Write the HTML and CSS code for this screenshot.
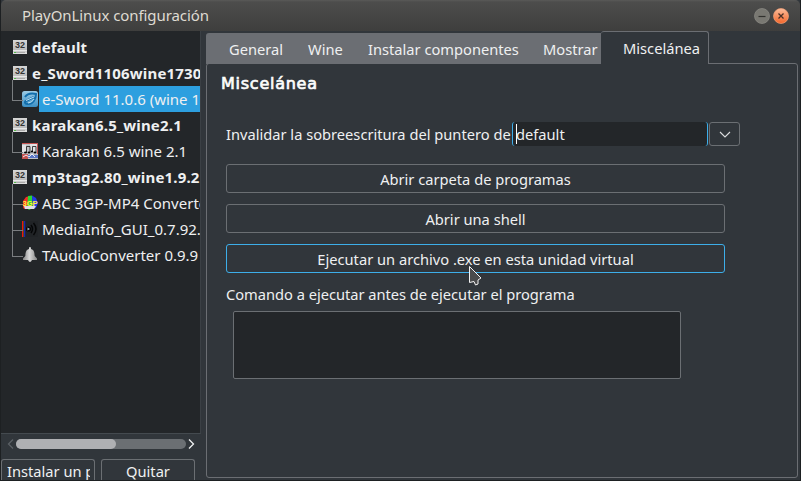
FILE: index.html
```html
<!DOCTYPE html>
<html lang="es">
<head>
<meta charset="utf-8">
<title>PlayOnLinux configuración</title>
<link rel="stylesheet" href="styles.css">
</head>
<body>
<svg class="defs" width="0" height="0" aria-hidden="true">
  <defs>
    <linearGradient id="drive-face" x1="0" y1="0" x2="0" y2="1"><stop offset="0" stop-color="#d6d6d6"/><stop offset=".7" stop-color="#bcbcbc"/><stop offset="1" stop-color="#e4e4e4"/></linearGradient>
    <linearGradient id="sword-face" x1="0" y1="0" x2="0" y2="1"><stop offset="0" stop-color="#9ccbe5"/><stop offset="1" stop-color="#3b8fc4"/></linearGradient>
    <linearGradient id="bell-face"><stop offset="0" stop-color="#858585"/><stop offset=".45" stop-color="#d8d8d8"/><stop offset="1" stop-color="#858585"/></linearGradient>
    <symbol id="drive" viewBox="0 0 14 14"><path fill="url(#drive-face)" d="M0 0h14v14H0z"/><path fill="#e8e8e8" d="M0 10h14v1H0z"/><path fill="#aaa" d="M2 12h10v1H2z"/><path fill="#50b848" d="M1 12h2v1H1z"/><text x="7" y="8.2" text-anchor="middle" class="drive-label">32</text></symbol>
  </defs>
</svg>
<div class="window">
  <header class="titlebar">
    <h1 class="title">PlayOnLinux configuración</h1>
    <div class="controls">
      <svg class="control" viewBox="0 0 16 16"><circle cx="8" cy="8" r="7.5" class="min-face"/><path d="M4.5 8.5h7" stroke="#31312e" stroke-width="1.2"/></svg>
      <svg class="control" viewBox="0 0 16 16"><defs><linearGradient id="close-face" x1="0" y1="0" x2="0" y2="1"><stop offset="0" stop-color="#fbbd9b"/><stop offset="1" stop-color="#f4662a"/></linearGradient></defs><circle cx="8" cy="8" r="7.5" fill="url(#close-face)" stroke="#f5a077" stroke-width=".7"/><path d="M5.5 5.5l5 5m0-5l-5 5" stroke="#4a3027" stroke-width="1.3"/></svg>
    </div>
  </header>
  <main class="content">
    <aside class="sidebar">
      <ul class="tree">
        <li><div class="row"><svg class="drive"><use href="#drive"/></svg><span class="drive-name">default</span></div></li>
        <li><div class="row"><svg class="drive"><use href="#drive"/></svg><span class="drive-name">e_Sword1106wine1730</span></div>
          <ul class="apps">
            <li class="row app selected"><svg class="app-icon" viewBox="0 0 16 16"><rect width="16" height="16" rx="2.5" fill="url(#sword-face)"/><path d="M3 6C5 3 9 2 14 3c0 5-3 10-8 10-3 0-4-2-2-3l8-4" fill="none" stroke="#126eac" stroke-width="2"/><path d="M4 9.5l8-3.5M6 12c3-.5 5-2 6-4" fill="none" stroke="#d5f1fc" stroke-width=".9"/></svg><span class="app-name">e-Sword 11.0.6 (wine 1</span></li>
          </ul></li>
        <li><div class="row"><svg class="drive"><use href="#drive"/></svg><span class="drive-name">karakan6.5_wine2.1</span></div>
          <ul class="apps">
            <li class="row app"><svg class="app-icon" viewBox="0 0 16 16"><path fill="#c0c3c7" d="M0 0h16v16H0z"/><path d="M0 2h4v7H0zM8 1h7v8H8z" fill="#e2e3e5"/><path d="M0 11h6v5H0zM0 0h16v1H0zM15 0h1v11h-1z" fill="#c45250"/><path d="M6 12h10v3H6z" fill="#5c77c5"/><path d="M1 14l3-2 3 2 3-3 3 3" fill="none" stroke="#eceef4"/><path d="M4.5 9V3.500H8V9M10.500 8V3.500H14V9" fill="none" stroke="#171717" stroke-width=".8"/><ellipse cx="3.500" cy="9.500" rx="1.500" ry="1"/><ellipse cx="7" cy="9.500" rx="1.500" ry="1"/><ellipse cx="10" cy="8.500" rx="1.200" ry="1"/><ellipse cx="13" cy="9.500" rx="1.500" ry="1"/></svg><span class="app-name">Karakan 6.5 wine 2.1</span></li>
          </ul></li>
        <li><div class="row"><svg class="drive"><use href="#drive"/></svg><span class="drive-name">mp3tag2.80_wine1.9.2</span></div>
          <ul class="apps">
            <li class="row app"><svg class="app-icon" viewBox="0 0 16 16"><path d="M1 6l3-4 4-1-2 12-4 1-1-2z" fill="#f32d26"/><path d="M6 1l4-.5 1 12.500-4 2-2-2z" fill="#27d637"/><path d="M10 .5L14 3l2 5-2 5-3 1z" fill="#243bea"/><path d="M2 11h12l-2 3H3z" fill="#dedee4"/><text x="8" y="10.500" text-anchor="middle" class="gp-label">3GP</text></svg><span class="app-name">ABC 3GP-MP4 Converter</span></li>
            <li class="row app"><svg class="app-icon" viewBox="0 0 16 16"><path fill="#202326" d="M3 0h13v16H3z"/><path fill="#f0160c" d="M0 0h1.600v16H0z"/><path fill="#087c24" d="M1.600 0h.6v16h-.6z"/><path fill="#1722d3" d="M2.200 0h1v16h-1z"/><circle cx="6.500" cy="8" r="2.600" fill="#060708"/><path d="M5.500 6.500L8 8 5.500 9.500z" fill="#a7b5bc"/><path d="M9 4q3 4 0 8M11.500 2q5 6 0 12" fill="none" stroke="#050607" stroke-width="1.500"/></svg><span class="app-name">MediaInfo_GUI_0.7.92.</span></li>
            <li class="row app"><svg class="app-icon" viewBox="0 0 16 16"><path d="M7 1a1 1 0 0 1 2 0v1c3.400 1 3.400 4 3.700 7l2.300 2.500V13H1v-1.500L3.300 9C3.600 6 3.600 3 7 2z" fill="url(#bell-face)"/><path d="M6 13h4q-2 4-4 0" fill="#d0d0d0"/></svg><span class="app-name">TAudioConverter 0.9.9</span></li>
          </ul></li>
      </ul>
      <div class="scroll"><svg class="arrow off" viewBox="0 0 7 12"><path d="M6 1.500L1.500 6 6 10.500"/></svg><div class="track"><div class="thumb"></div></div><svg class="arrow" viewBox="0 0 7 12"><path d="M1 1.500L5.500 6 1 10.500"/></svg></div>
      <div class="actions"><button class="btn install"><span>Instalar un programa</span></button><button class="btn remove"><span>Quitar</span></button></div>
    </aside>
    <section class="notebook">
      <nav class="tabs">
        <div class="inactive"><span class="tab general">General</span><span class="tab wine">Wine</span><span class="tab components">Instalar componentes</span><span class="tab show">Mostrar</span></div>
        <span class="tab-active">Miscelánea</span><div class="rest"></div>
      </nav>
      <div class="panel">
        <h2 class="heading">Miscelánea</h2>
        <div class="field"><label class="pointer-label">Invalidar la sobreescritura del puntero de</label><div class="input"><span>default</span></div><button class="btn drop"><svg viewBox="0 0 12 7"><path d="M1 1l5 5 5-5"/></svg></button></div>
        <div class="buttons"><button class="btn">Abrir carpeta de programas</button><button class="btn">Abrir una shell</button><button class="btn hot">Ejecutar un archivo .exe en esta unidad virtual</button></div>
        <p class="command-label">Comando a ejecutar antes de ejecutar el programa</p>
        <div class="textarea"></div>
      </div>
    </section>
  </main>
  <svg class="cursor" viewBox="0 0 16 22"><path d="M3.500 1.500v16l4.500-1 1.500 3.500 2.500-1v-4l3-2z" fill="#4a4b4c" stroke="#f3f3f3"/></svg>
</div>
</body>
</html>
```
FILE: styles.css
```css
* { box-sizing: border-box; }
body { margin: 0; background: #202325; font: 15px/20px "Noto Sans", sans-serif; color: #eff0f1; }
h1, h2, p, ul { margin: 0; padding: 0; font-weight: 400; }
ul { list-style: none; }
.defs { position: absolute; }
.window { position: relative; display: flex; flex-direction: column; width: 801px; height: 481px; overflow: hidden; background: #31363b; border: solid #1d2022; border-width: 0 1px 1px; }
.titlebar { display: flex; flex: none; align-items: center; justify-content: space-between; height: 31px; padding: 0 11px 0 21px; background: linear-gradient(#5a5a58 0, #4d4d4c 2px, #3e3e3d 100%); border-radius: 5px 5px 0 0; }
.title { font-size: 15px; letter-spacing: -.08px; line-height: 20px; padding-bottom: 1px; color: #dfdbd2; }
.controls { display: flex; gap: 3px; padding-top: 1px; }
.control { width: 16px; height: 16px; }
.min-face { fill: #797872; stroke: #8e8d86; stroke-width: .7; }
.content { display: flex; flex: 1; min-height: 0; }
.sidebar { width: 200px; flex: none; display: flex; flex-direction: column; }
.tree { height: 403px; padding-top: 3px; overflow: hidden; background: #232629; border-right: 1px solid #3b4045; border-bottom: 1px solid #444a4f; }
.row { display: flex; align-items: center; height: 26px; white-space: nowrap; padding-left: 12px; }
.drive { width: 14px; height: 14px; flex: none; margin-right: 5px; }
.drive-label { font: bold 9px "Liberation Sans", sans-serif; fill: #333; }
.drive-name { font-weight: 700; letter-spacing: .18px; }
.apps { margin-left: 11px; position: relative; }
.app { position: relative; padding-left: 10px; }
.app::before { content: ""; position: absolute; left: 0; top: -13px; width: 10px; height: 27px; border: solid #7a7d80; border-width: 0 0 1px 1px; }
.app:first-child::before { top: -6px; height: 20px; }
.app-icon { width: 16px; height: 16px; flex: none; }
.app-name { display: flex; align-items: center; height: 26px; flex: 1; padding-left: 3px; margin-left: 1px; }
.selected .app-name { background: #2d9fdf; }
.gp-label { font: bold 7.5px "Liberation Sans", sans-serif; fill: #fff13b; }
.scroll { display: flex; align-items: center; height: 19px; padding: 0 6px; gap: 2px; }
.arrow { width: 7px; height: 12px; flex: none; fill: none; stroke: #eff0f1; stroke-width: 1.3; }
.off { stroke: #5b6065; }
.track { flex: 1; height: 10px; border-radius: 5px; background: #6b6f73; }
.thumb { width: 100px; height: 10px; border-radius: 5px; background: #afb0b3; }
.actions { display: flex; gap: 6px; padding-top: 6px; height: 27px; overflow: hidden; }
.btn { display: flex; align-items: center; justify-content: center; margin: 0; padding: 0; border: 1px solid #6b6f73; border-radius: 3px; background: transparent; color: #eff0f1; font: inherit; white-space: nowrap; }
.actions .btn { height: 23px; width: 94px; flex: none; border-bottom: 0; border-radius: 3px 3px 0 0; font-size: 14.67px; }
.actions .install { justify-content: flex-start; padding: 0 4px 0 5px; }
.install span { overflow: hidden; }
.notebook { flex: 1; display: flex; flex-direction: column; padding: 0 2px 2px 5px; min-width: 0; font-size: 14.67px; }
.tabs { display: flex; height: 32px; flex: none; position: relative; z-index: 1; }
.inactive { width: 395px; height: 31px; margin-top: 2px; flex: none; display: flex; overflow: hidden; background: #6b6e73; border-radius: 3px 0 0 0; white-space: nowrap; line-height: 33px; padding-left: 23px; }
.general { width: 79px; } .wine { width: 60px; } .components { width: 175px; }
.tab { flex: none; }
.tab-active { width: 108px; height: 33px; flex: none; background: #31363b; border: solid #6b6e73; border-width: 1px 1px 0 0; border-radius: 3px 3px 0 0; padding-left: 22px; line-height: 33px; }
.rest { flex: 1; }
.panel { flex: 1; border: 1px solid #6b6e73; border-radius: 3px; padding: 10px 0 0 19px; }
.heading { font: 400 16px/20px "DejaVu Sans", sans-serif; letter-spacing: .75px; -webkit-text-stroke: .7px #fcfcfc; color: #fcfcfc; margin-left: -5px; }
.field { display: flex; align-items: center; height: 24px; margin-top: 28px; }
.pointer-label { width: 286px; white-space: nowrap; }
.input { width: 196px; height: 24px; background: #232629; border: solid #3daee9; border-width: 0 1px; border-radius: 3px; padding-left: 3px; line-height: 24px; }
.input span { display: block; border-left: 1px solid #fff; height: 20px; line-height: 20px; margin-top: 2px; text-indent: -1px; }
.drop { width: 31px; height: 24px; margin-left: 1px; }
.drop svg { width: 12px; height: 7px; fill: none; stroke: #dcdddf; stroke-width: 1.1; }
.buttons { display: flex; flex-direction: column; gap: 11px; margin-top: 18px; width: 499px; }
.buttons .btn { height: 29px; padding-top: 1px; }
.buttons .hot { border-color: #3daee9; }
.command-label { margin-top: 11px; letter-spacing: -.02px; }
.textarea { width: 448px; height: 68px; margin: 7px 0 0 7px; background: #232629; border: 1px solid #6b6f73; border-radius: 2px; }
.cursor { position: absolute; left: 465px; top: 265px; width: 16px; height: 22px; z-index: 2; }
```
